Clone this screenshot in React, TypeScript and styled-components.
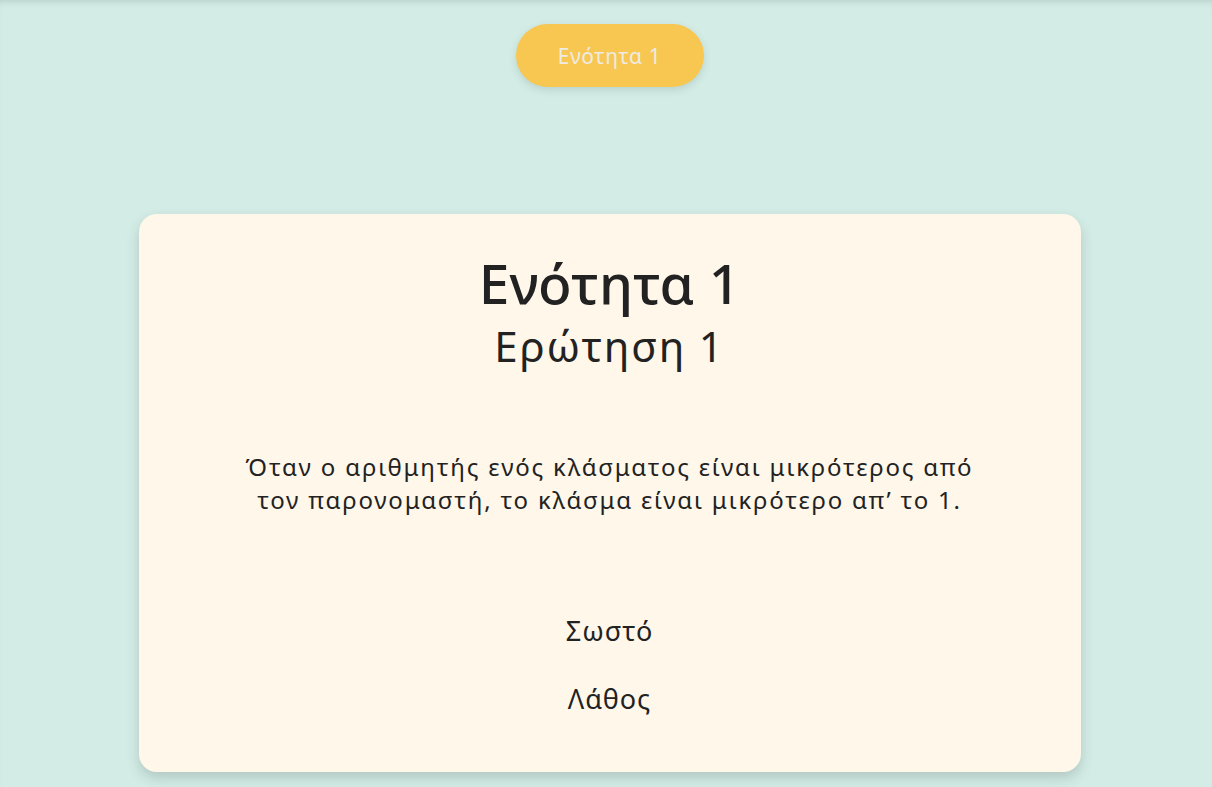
import React from "react";
import styled, { createGlobalStyle } from "styled-components";

const Global = createGlobalStyle`
  html, body { margin: 0; padding: 0; }
  body {
    background: #d3ede6;
    font-family: "Noto Sans", "Open Sans", sans-serif;
    color: #222;
  }
`;

const Page = styled.div`
  min-height: 787px;
  box-sizing: border-box;
  padding-left: 7px;
  display: flex;
  flex-direction: column;
  align-items: center;
  box-shadow: inset 0 6px 8px -6px rgba(0, 0, 0, 0.18);
`;

const SectionButton = styled.button`
  margin-top: 24px;
  width: 188px;
  height: 63px;
  border: none;
  border-radius: 32px;
  background: #f8c752;
  color: #eeeae4;
  font-family: inherit;
  font-size: 21px;
  letter-spacing: 0.6px;
  box-shadow: 0 3px 8px rgba(0, 0, 0, 0.12);
  cursor: pointer;
`;

const Card = styled.section`
  margin-top: 127px;
  width: 942px;
  height: 558px;
  box-sizing: border-box;
  background: #fef7ea;
  border-radius: 18px;
  box-shadow: 0 6px 14px rgba(0, 0, 0, 0.16);
  display: flex;
  flex-direction: column;
  align-items: center;
  padding-top: 36px;
`;

const Title = styled.h1`
  margin: 0;
  font-size: 55px;
  font-weight: 500;
  line-height: 66px;
  color: #222;
`;

const Subtitle = styled.h2`
  margin: 0;
  font-size: 42px;
  font-weight: 400;
  letter-spacing: 1.8px;
  line-height: 60px;
  color: #222;
`;

const Question = styled.p`
  margin: 74px 0 0;
  width: 760px;
  text-align: center;
  font-size: 24px;
  letter-spacing: 1.8px;
  line-height: 33px;
`;

const Options = styled.div`
  margin-top: 98px;
  display: flex;
  flex-direction: column;
  align-items: center;
  gap: 34px;
`;

const Option = styled.button`
  background: none;
  border: none;
  padding: 0;
  font-family: inherit;
  font-size: 27px;
  letter-spacing: 1px;
  line-height: 34px;
  color: #222;
  cursor: pointer;
`;

export default function App() {
  return (
    <>
      <Global />
      <Page>
        <SectionButton>Ενότητα 1</SectionButton>
        <Card>
          <Title>Ενότητα 1</Title>
          <Subtitle>Ερώτηση 1</Subtitle>
          <Question>
            Όταν ο αριθμητής ενός κλάσματος είναι μικρότερος από τον
            παρονομαστή, το κλάσμα είναι μικρότερο απ’ το 1.
          </Question>
          <Options>
            <Option>Σωστό</Option>
            <Option>Λάθος</Option>
          </Options>
        </Card>
      </Page>
    </>
  );
}
